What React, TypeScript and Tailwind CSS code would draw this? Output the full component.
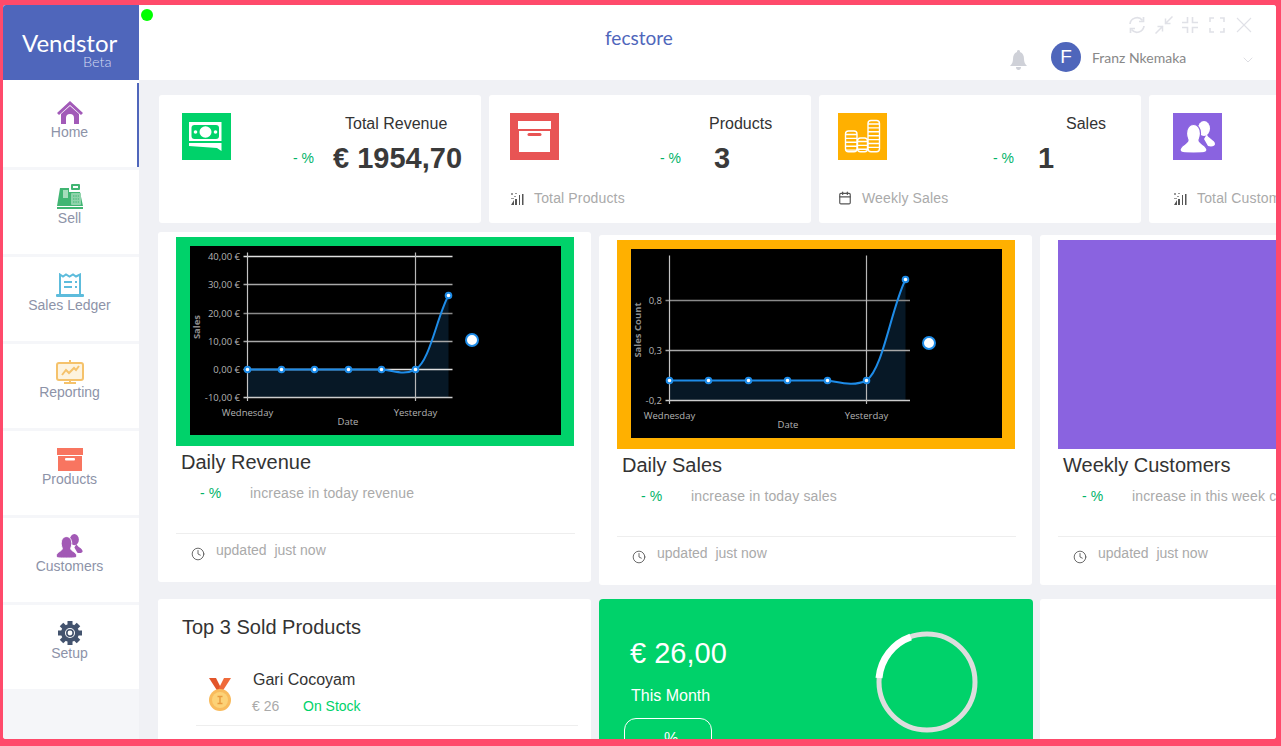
import { Calendar, ChevronDown, Clock } from "lucide-react";

const sans = "font-['Liberation_Sans',Arial,sans-serif]";

function HomeIcon() {
    return (
        <svg width="28" height="24" viewBox="0 0 28 24">
            <path d="M14 1 L27 13 L25 15 L14 5 L3 15 L1 13 Z" fill="#a25ab8" />
            <path d="M5 14 L14 6 L23 14 V24 H18 V18 Q18 14 14 14 Q10 14 10 18 V24 H5 Z" fill="#a25ab8" />
        </svg>
    );
}

function RegisterIcon() {
    return (
        <svg width="28" height="26" viewBox="0 0 28 26">
            <rect x="15" y="0" width="9" height="6" rx="1" fill="#41b573" />
            <rect x="17" y="2" width="5" height="2" fill="#fff" />
            <path d="M4 4 H13 V8 H24 L27 22 H1 Z" fill="#41b573" />
            <rect x="7" y="6" width="5" height="8" fill="#a6dcbc" />
            <rect x="15" y="9" width="10" height="12" rx="1" fill="#8fd3ab" />
            <path d="M17 12 H23 M17 15 H23 M17 18 H23" stroke="#41b573" strokeWidth="1.2" strokeDasharray="1.4 1" />
            <rect x="1" y="23" width="26" height="2" fill="#41b573" />
        </svg>
    );
}

function LedgerIcon() {
    return (
        <svg width="28" height="24" viewBox="0 0 28 24">
            <path d="M4 1.5 L7 3.5 L10 1.5 L13.5 3.5 L17 1.5 L20 3.5 L24 1.5 V22 H4 Z" fill="#fff" stroke="#5dbcdc" strokeWidth="2" />
            <rect x="0" y="21" width="28" height="3" rx="1" fill="#5dbcdc" />
            <path d="M8 9 H16 M19 9 H21 M8 14 H16 M19 14 H21" stroke="#5dbcdc" strokeWidth="2" />
        </svg>
    );
}

function ReportIcon() {
    return (
        <svg width="28" height="24" viewBox="0 0 28 24">
            <rect x="1" y="3" width="26" height="17" rx="2" fill="#fdf3df" stroke="#f5c26b" strokeWidth="2" />
            <path d="M14 0 V3 M14 20 V22 M8 23 H20" stroke="#f5c26b" strokeWidth="2" />
            <path d="M6 15 L10 10 L13 13 L18 8 L20 10 L23 6" fill="none" stroke="#f5c26b" strokeWidth="2" />
        </svg>
    );
}

function BoxIcon({ fill, hole }: { fill: string; hole: string }) {
    return (
        <svg width="26" height="23" viewBox="0 0 26 23">
            <rect x="0" y="0" width="26" height="7" fill={fill} />
            <rect x="1" y="8" width="24" height="15" fill={fill} />
            <rect x="8" y="10" width="10" height="2.5" rx="1" fill={hole} />
        </svg>
    );
}

function PeopleIcon({ fill, gap, width, height }: { fill: string; gap: string; width: number; height: number }) {
    return (
        <svg width={width} height={height} viewBox="0 0 35 32">
            <ellipse cx="24" cy="7.5" rx="6" ry="7.5" fill={fill} />
            <path d="M27 13 C27 17 35 19 35 23 C35 25 32 26 28 25 L24 18 Z" fill={fill} />
            <g fill={fill} stroke={gap} strokeWidth="1.2">
                <path d="M13.5 3.5 C18 3.5 20.5 7.5 20.5 12.5 C20.5 15.5 19.5 17.5 19 19 C19 23 27 24 27 29 C27 32 24 32 13.5 32 C3 32 0 32 0 29 C0 24 8 23 8 19 C7.5 17.5 6.5 15.5 6.5 12.5 C6.5 7.5 9 3.5 13.5 3.5 Z" />
            </g>
        </svg>
    );
}

function GearIcon() {
    return (
        <svg width="26" height="24" viewBox="0 0 26 24">
            <g transform="translate(13 12)">
                {[0, 45, 90, 135, 180, 225, 270, 315].map((a) => (
                    <rect key={a} x="-2.5" y="-12" width="5" height="5" fill="#43536e" transform={`rotate(${a})`} />
                ))}
                <circle r="7" fill="none" stroke="#43536e" strokeWidth="4" />
                <circle r="3.2" fill="none" stroke="#43536e" strokeWidth="1.6" />
            </g>
        </svg>
    );
}

function MoneyIcon() {
    return (
        <svg width="49" height="47" viewBox="0 0 49 47">
            <rect x="7" y="9" width="32.5" height="19" fill="#fff" />
            <rect x="9.5" y="12" width="27.5" height="14" rx="3" fill="#00d26a" />
            <ellipse cx="23.5" cy="19" rx="6" ry="5.8" fill="#fff" />
            <circle cx="13.5" cy="19" r="1.8" fill="#fff" />
            <circle cx="33.5" cy="19" r="1.8" fill="#fff" />
            <path d="M7 30 H39.5 V38 L35 35 L7 33 Z" fill="#fff" />
        </svg>
    );
}

function CoinStack({ x, top, width }: { x: number; top: number; width: number }) {
    const rows: number[] = [];
    for (let y = top + 3.5; y < 38; y += 3.9) rows.push(y);
    return (
        <g fill="none" stroke="#fff" strokeWidth="1.4">
            <rect x={x} y={top} width={width} height={38.7 - top} rx="3" />
            {rows.map((y) => (
                <line key={y} x1={x} x2={x + width} y1={y} y2={y} />
            ))}
        </g>
    );
}

function CoinsIcon() {
    return (
        <svg width="49" height="47" viewBox="0 0 49 47">
            <CoinStack x={7.5} top={18} width={11.5} />
            <CoinStack x={19.5} top={25} width={10} />
            <CoinStack x={30} top={7.5} width={11.5} />
        </svg>
    );
}

function BarsIcon() {
    return (
        <svg width="14" height="13" viewBox="0 0 14 13">
            <path d="M1 1 h2 v2 h-2 z M5 1 h2 v1 h-2 z M4 4 h2 v1 h-2 z M1 6 h3 v1 h-3 z" fill="#999" />
            <path d="M1 13 L4 8 V13 Z M5 13 V7 H7 V13 Z M9 13 V3 H10 V13 Z M12 13 V2 H13.5 V13 Z" fill="#555" />
        </svg>
    );
}

function Medal() {
    return (
        <svg width="24" height="34" viewBox="0 0 24 34">
            <path d="M1 0 H8 L15 14 H10 Z" fill="#e2552a" />
            <path d="M23 0 H16 L9 14 H14 Z" fill="#ef6a3a" />
            <circle cx="12" cy="22" r="11" fill="#f9bb5c" />
            <circle cx="12" cy="22" r="8" fill="#fcd277" />
            <path d="M9.5 18.5 H14.5 M12 18.5 V25.5 M9.5 25.5 H14.5" stroke="#e99a3c" strokeWidth="1.4" />
        </svg>
    );
}

const navItems = [
    { label: "Home", icon: <HomeIcon /> },
    { label: "Sell", icon: <RegisterIcon /> },
    { label: "Sales Ledger", icon: <LedgerIcon /> },
    { label: "Reporting", icon: <ReportIcon /> },
    { label: "Products", icon: <BoxIcon fill="#f87560" hole="#fff" /> },
    { label: "Customers", icon: <PeopleIcon fill="#a259b5" gap="#ffffff" width={27} height={24} /> },
    { label: "Setup", icon: <GearIcon /> },
];

interface ChartProps {
    yTitle: string;
    axisX: number;
    gridEnd: number;
    mark: number;
    dateX: number;
    labelX: number;
    grid: { y: number; label: string; tone: string }[];
    xs: number[];
    base: number;
    bottom: number;
    tip: number;
    dip: string;
    dotX: number;
}

function Chart({ yTitle, axisX, gridEnd, mark, dateX, labelX, grid, xs, base, bottom, tip, dip, dotX }: ChartProps) {
    const last = xs[xs.length - 1];
    const line = `M${axisX} ${base} L${xs[4]} ${base} ${dip} ${last} ${tip}`;
    return (
        <svg width="371" height="189" viewBox="0 0 371 189" className="block bg-black">
            <path d={`${line} L${last} ${bottom} L${axisX} ${bottom} Z`} fill="#071826" />
            {grid.map((g) => (
                <line key={g.y} x1={axisX - 4} x2={gridEnd} y1={g.y} y2={g.y} stroke={g.tone} strokeWidth="1.3" />
            ))}
            <line x1={axisX} x2={axisX} y1="6.5" y2="155" stroke="#c4c4c4" strokeWidth="1.2" />
            <line x1={mark} x2={mark} y1="6.5" y2="155" stroke="#b8b8b8" strokeWidth="1.2" />
            <path d={line} fill="none" stroke="#1e8ce8" strokeWidth="2" />
            {xs.map((x, i) => (
                <circle key={x} cx={x} cy={i === xs.length - 1 ? tip : base} r="2.8" fill="#fff" stroke="#1e8ce8" strokeWidth="2" />
            ))}
            <circle cx={dotX} cy="94" r="6" fill="#fff" stroke="#1e8ce8" strokeWidth="2" />
            <g fontFamily="'Open Sans', sans-serif" fontSize="9.5" fill="#b4b4b4">
                {grid.map((g) => (
                    <text key={g.label} x={labelX} y={g.y + 3} textAnchor="end">
                        {g.label}
                    </text>
                ))}
                <text x={axisX} y="170" textAnchor="middle">Wednesday</text>
                <text x={mark} y="170" textAnchor="middle">Yesterday</text>
                <text x={dateX} y="179" textAnchor="middle">Date</text>
                <text x="10" y="81" textAnchor="middle" fontWeight="700" transform="rotate(-90 10 81)" fill="#8d8d8d">
                    {yTitle}
                </text>
            </g>
        </svg>
    );
}

function StatFooter({ icon, text }: { icon: React.ReactNode; text: string }) {
    return (
        <div className="flex items-center gap-[10px] text-sm tracking-[0.15px] text-[#aaaaaa] whitespace-nowrap">
            {icon}
            <span>{text}</span>
        </div>
    );
}

function UpdatedFooter() {
    return (
        <div className="ml-[18px] mr-[16px] mt-[30px] border-t border-[#eeeeee] pt-[7px] pl-[15px] flex items-start gap-[11px] text-sm text-[#aaaaaa]">
            <Clock size={14} color="#555" strokeWidth={1.5} className="mt-[6px]" />
            <span className="leading-[18px]">updated&nbsp; just now</span>
        </div>
    );
}

function RevenueCard() {
    return (
        <div className="w-[433px] h-[350px] shrink-0 rounded-[3px] bg-white pt-[5px] overflow-hidden">
            <div className="ml-[18px] w-[398px] h-[209px] bg-[#00d26a] pt-[9px] pl-[14px]">
                <Chart
                    yTitle="Sales"
                    axisX={57.5}
                    gridEnd={262.5}
                    mark={225.5}
                    dateX={158}
                    labelX={50}
                    xs={[57.5, 91.5, 124.5, 158.5, 191.5, 225.5, 258.5]}
                    base={123.5}
                    bottom={151.5}
                    tip={49.5}
                    dip="C203 124 213 130 225.5 123.5 C240 115 247 70"
                    dotX={282}
                    grid={[
                        { y: 10.5, label: "40,00 €", tone: "#e0e0e0" },
                        { y: 38.5, label: "30,00 €", tone: "#a8a8a8" },
                        { y: 67.5, label: "20,00 €", tone: "#8a8a8a" },
                        { y: 95.5, label: "10,00 €", tone: "#a8a8a8" },
                        { y: 123.5, label: "0,00 €", tone: "#e0e0e0" },
                        { y: 151.5, label: "-10,00 €", tone: "#cccccc" },
                    ]}
                />
            </div>
            <div className="ml-[23px] mt-[4px] text-xl leading-[24px] text-[#333333]">Daily Revenue</div>
            <div className="ml-[42px] mt-[9px] flex text-sm tracking-[0.15px] leading-[20px] text-[#aaaaaa]">
                <span className="w-[50px] text-[#00b368]">- %</span>
                <span>increase in today revenue</span>
            </div>
            <UpdatedFooter />
        </div>
    );
}

function SalesCard() {
    return (
        <div className="w-[433px] h-[350px] shrink-0 mt-[3px] rounded-[3px] bg-white pt-[5px] overflow-hidden">
            <div className="ml-[18px] w-[398px] h-[209px] bg-[#ffb000] pt-[9px] pl-[14px]">
                <Chart
                    yTitle="Sales Count"
                    axisX={38.5}
                    gridEnd={279}
                    mark={235.5}
                    dateX={157}
                    labelX={31}
                    xs={[38.5, 77.5, 117.5, 156.5, 196.5, 235.5, 274.5]}
                    base={131.5}
                    bottom={151.5}
                    tip={30.5}
                    dip="C208 133 222 138 235.5 131.5 C252 120 260 60"
                    dotX={298}
                    grid={[
                        { y: 51.5, label: "0,8", tone: "#8a8a8a" },
                        { y: 101.5, label: "0,3", tone: "#a8a8a8" },
                        { y: 151.5, label: "-0,2", tone: "#cccccc" },
                    ]}
                />
            </div>
            <div className="ml-[23px] mt-[4px] text-xl leading-[24px] text-[#333333]">Daily Sales</div>
            <div className="ml-[42px] mt-[9px] flex text-sm tracking-[0.15px] leading-[20px] text-[#aaaaaa]">
                <span className="w-[50px] text-[#00b368]">- %</span>
                <span>increase in today sales</span>
            </div>
            <UpdatedFooter />
        </div>
    );
}

function CustomersCard() {
    return (
        <div className="w-[433px] h-[350px] shrink-0 mt-[3px] rounded-[3px] bg-white pt-[5px] overflow-hidden">
            <div className="ml-[18px] w-[398px] h-[209px] bg-[#8a63e0]" />
            <div className="ml-[23px] mt-[4px] text-xl leading-[24px] text-[#333333]">Weekly Customers</div>
            <div className="ml-[42px] mt-[9px] flex text-sm tracking-[0.15px] leading-[20px] text-[#aaaaaa] whitespace-nowrap">
                <span className="w-[50px] text-[#00b368]">- %</span>
                <span>increase in this week customers</span>
            </div>
            <UpdatedFooter />
        </div>
    );
}

export default function App() {
    return (
        <div className={`${sans} relative w-full h-screen overflow-hidden bg-[#ff4a6b] pt-[5px] pl-[3px] pr-[5px] pb-[7px]`}>
            <div className="h-full rounded-[3px] overflow-hidden flex flex-col bg-[#f0f1f5]">
                {/* Cabecera */}
                <header className="h-[75px] shrink-0 flex bg-white">
                    <div className="w-[136px] shrink-0 bg-[#4f66bb] pt-[26px] pl-[19px] text-white font-['Lato',sans-serif]">
                        <div className="text-[24px] leading-[24px]">Vendstor</div>
                        <div className="ml-[61px] text-[14.5px] leading-[14px] font-light text-[#d5dbf2]">Beta</div>
                    </div>
                    <div className="relative flex-1">
                        <div className="absolute left-[2px] top-[4px] w-[12px] h-[12px] rounded-full bg-[#00ff00]" />
                        <div className="absolute left-[466px] top-[22px] text-[19px] leading-[22px] text-[#4f66bb] font-['Lato',sans-serif]">fecstore</div>
                        <div className="flex justify-end items-center gap-[9px] pr-[24px] pt-[11px]">
                            <svg width="18" height="18" viewBox="0 0 18 18" fill="none" stroke="#e0e1e7" strokeWidth="1.7">
                                <path d="M2 8 A7 7 0 0 1 14.5 4.5 M16 10 A7 7 0 0 1 3.5 13.5" />
                                <path d="M15.5 1 V5.5 H11 M2.5 17 V12.5 H7" />
                            </svg>
                            <svg width="18" height="18" viewBox="0 0 18 18" fill="none" stroke="#e0e1e7" strokeWidth="1.5">
                                <path d="M17.5 0.5 L10 8 M10.5 2.5 V7.5 H15.5 M0.5 17.5 L8 10 M2.5 10.5 H7.5 V15.5" />
                            </svg>
                            <svg width="16" height="16" viewBox="0 0 16 16" fill="none" stroke="#e0e1e7" strokeWidth="1.6">
                                <path d="M0 5.5 H5.5 V0 M10.5 0 V5.5 H16 M0 10.5 H5.5 V16 M10.5 16 V10.5 H16" />
                            </svg>
                            <svg width="16" height="16" viewBox="0 0 16 16" fill="none" stroke="#e0e1e7" strokeWidth="1.6" className="ml-[2px]">
                                <path d="M5 1 H1 V5 M11 1 H15 V5 M1 11 V15 H5 M15 11 V15 H11" />
                            </svg>
                            <svg width="16" height="16" viewBox="0 0 16 16" fill="none" stroke="#e0e1e7" strokeWidth="1.1" className="ml-[2px]">
                                <path d="M1 1 L15 15 M15 1 L1 15" />
                            </svg>
                        </div>
                        <div className="flex items-center pl-[871px] mt-[8px]">
                            <svg width="17" height="20" viewBox="0 0 17 20" fill="#cfd1d8" className="mt-[5px]">
                                <path d="M8.5 0 C10 0 10 1 10 2 C13 3 14 6 14 9 C14 12 15 14 17 16 H0 C2 14 3 12 3 9 C3 6 4 3 7 2 C7 1 7 0 8.5 0 Z" />
                                <path d="M6 17 H11 C11 19 10 20 8.5 20 C7 20 6 19 6 17 Z" />
                            </svg>
                            <div className="ml-[24px] w-[30px] h-[30px] rounded-full bg-[#4f66bb] flex items-center justify-center text-[19px] text-white">F</div>
                            <span className="ml-[11px] mt-[2px] text-sm text-[#888888] font-['Lato',sans-serif] whitespace-nowrap">Franz Nkemaka</span>
                            <ChevronDown size={16} color="#d5d6dc" strokeWidth={1.2} className="ml-[54px] mt-[5px]" />
                        </div>
                    </div>
                </header>

                <div className="flex flex-1 min-h-0">
                    {/* Menu lateral */}
                    <nav className="w-[136px] shrink-0 bg-[#f5f6f9]">
                        {navItems.map((item, i) => (
                            <div key={item.label} className={i === 0 ? "bg-white pt-[3px]" : "bg-white mt-[3px]"}>
                                <div className={i === 0 ? "h-[84px] pt-[15px] pr-px flex flex-col items-center border-r-2 border-[#4f66bb]" : "h-[84px] pt-[14px] pr-[3px] flex flex-col items-center"}>
                                    <div className="h-[26px] flex items-end justify-center">{item.icon}</div>
                                    <span className="text-sm leading-[16px] text-[#8d93a8]">{item.label}</span>
                                </div>
                            </div>
                        ))}
                    </nav>

                    <main className="flex-1 min-w-0 overflow-hidden pt-[15px] pl-[19px]">
                        {/* Tarjetas resumen */}
                        <div className="flex gap-[8px] ml-px">
                            <div className="w-[322px] h-[128px] shrink-0 rounded-[3px] bg-white pt-[18px] pl-[23px]">
                                <div className="flex">
                                    <div className="w-[49px] h-[47px] shrink-0 bg-[#00d26a]"><MoneyIcon /></div>
                                    <div className="ml-[62px]">
                                        <div className="pl-[52px] pt-px text-base leading-[20px] text-[#333333] whitespace-nowrap">Total Revenue</div>
                                        <div className="flex items-center mt-[9px] h-[32px]">
                                            <span className="w-[40px] -mt-[3px] text-sm text-[#00b368]">- %</span>
                                            <span className="text-[29px] font-bold text-[#3a3a3a] whitespace-nowrap">€ 1954,70</span>
                                        </div>
                                    </div>
                                </div>
                            </div>
                            <div className="w-[322px] h-[128px] shrink-0 rounded-[3px] bg-white pt-[18px] pl-[21px]">
                                <div className="flex">
                                    <div className="w-[49px] h-[47px] shrink-0 bg-[#e85454] pl-[8px] pt-[8px]">
                                        <svg width="33" height="31" viewBox="0 0 33 31">
                                            <rect x="0" y="0" width="33" height="8" fill="#fff" />
                                            <rect x="1" y="10" width="31" height="21" fill="#fff" />
                                            <rect x="9.5" y="12" width="14" height="3" rx="1.5" fill="#e85454" />
                                        </svg>
                                    </div>
                                    <div className="ml-[101px]">
                                        <div className="pl-[49px] pt-px text-base leading-[20px] text-[#333333]">Products</div>
                                        <div className="flex items-center mt-[9px] h-[32px]">
                                            <span className="w-[54px] -mt-[3px] text-sm text-[#00b368]">- %</span>
                                            <span className="text-[29px] font-bold text-[#3a3a3a]">3</span>
                                        </div>
                                    </div>
                                </div>
                                <div className="mt-[13px]">
                                    <StatFooter icon={<BarsIcon />} text="Total Products" />
                                </div>
                            </div>
                            <div className="w-[322px] h-[128px] shrink-0 rounded-[3px] bg-white pt-[18px] pl-[19px]">
                                <div className="flex">
                                    <div className="w-[49px] h-[47px] shrink-0 bg-[#ffb000]"><CoinsIcon /></div>
                                    <div className="ml-[106px]">
                                        <div className="pl-[73px] pt-px text-base leading-[20px] text-[#333333]">Sales</div>
                                        <div className="flex items-center mt-[9px] h-[32px]">
                                            <span className="w-[45px] -mt-[3px] text-sm text-[#00b368]">- %</span>
                                            <span className="text-[29px] font-bold text-[#3a3a3a]">1</span>
                                        </div>
                                    </div>
                                </div>
                                <div className="mt-[13px]">
                                    <StatFooter icon={<Calendar size={14} color="#555" strokeWidth={2} />} text="Weekly Sales" />
                                </div>
                            </div>
                            <div className="w-[322px] h-[128px] shrink-0 rounded-[3px] bg-white pt-[18px] pl-[24px]">
                                <div className="w-[49px] h-[47px] bg-[#8a63e0] flex items-center justify-center">
                                    <PeopleIcon fill="#fff" gap="#8a63e0" width={35} height={32} />
                                </div>
                                <div className="mt-[28px]">
                                    <StatFooter icon={<BarsIcon />} text="Total Customers" />
                                </div>
                            </div>
                        </div>

                        {/* Graficas */}
                        <div className="flex gap-[8px] mt-[9px]">
                            <RevenueCard />
                            <SalesCard />
                            <CustomersCard />
                        </div>

                        {/* Fila inferior */}
                        <div className="flex gap-[8px] mt-[14px]">
                            <div className="w-[433px] h-[200px] shrink-0 rounded-[3px] bg-white">
                                <div className="ml-[24px] pt-[16px] text-xl leading-[24px] text-[#333333]">Top 3 Sold Products</div>
                                <div className="ml-[38px] mr-[13px] mt-[31px] pb-[9px] border-b border-[#eeeeee] flex">
                                    <div className="ml-[12px] mt-[8px]"><Medal /></div>
                                    <div className="ml-[21px]">
                                        <div className="text-base leading-[20px] text-[#333333]">Gari Cocoyam</div>
                                        <div className="mt-[6px] -ml-px flex text-sm leading-[20px]">
                                            <span className="w-[51px] text-[#aaaaaa]">€ 26</span>
                                            <span className="text-[#00d26a]">On Stock</span>
                                        </div>
                                    </div>
                                </div>
                            </div>
                            <div className="w-[434px] h-[200px] shrink-0 rounded-[4px] bg-[#00d26a] text-white relative">
                                <div className="pl-[31px] pt-[37px] text-[29px] leading-[34px]">€ 26,00</div>
                                <div className="pl-[32px] mt-[16px] text-base leading-[20px]">This Month</div>
                                <div className="ml-[25px] mt-[12px] w-[88px] h-[50px] rounded-[12px] border border-white flex justify-center pl-[6px] pt-[8px] text-base">%</div>
                                <svg width="104" height="104" viewBox="0 0 104 104" className="absolute left-[276px] top-[31px]">
                                    <circle cx="52" cy="52" r="48" fill="none" stroke="#dddddd" strokeWidth="5" />
                                    <path d="M35.7 7 A48 48 0 0 0 4 48" fill="none" stroke="#ffffff" strokeWidth="7" />
                                </svg>
                            </div>
                            <div className="w-[433px] h-[200px] shrink-0 -ml-px rounded-[3px] bg-white" />
                        </div>
                    </main>
                </div>
            </div>
        </div>
    );
}
